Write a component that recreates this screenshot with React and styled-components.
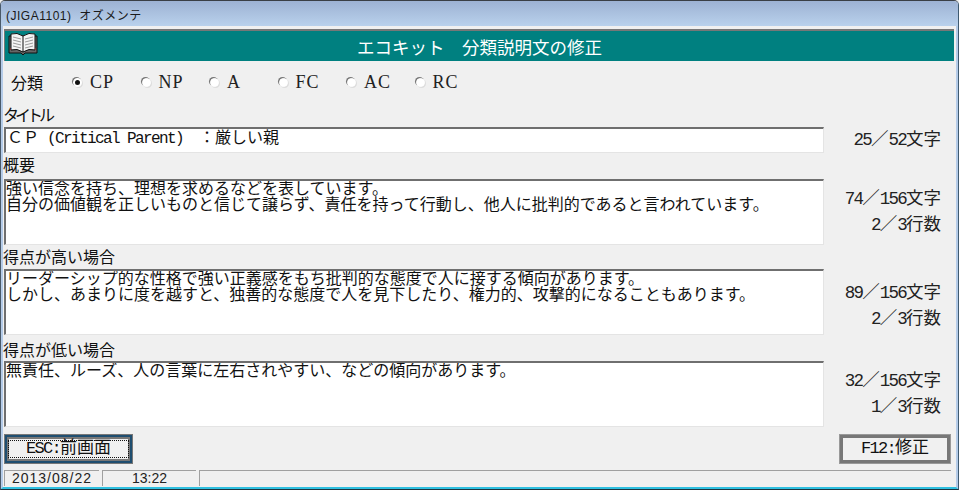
import React from 'react';
import styled, { createGlobalStyle } from 'styled-components';

const Mincho = `"Liberation Mono", "Noto Sans CJK JP", monospace`;

const GlobalStyle = createGlobalStyle`
  html, body {
    margin: 0;
    padding: 0;
    background: #f0f0f0;
  }
`;

const Window = styled.div`
  width: 959px;
  height: 490px;
  box-sizing: border-box;
  display: flex;
  flex-direction: column;
  background: #f0f0f0;
  border-top: 1px solid #3a3f45;
  border-left: 1px solid #4a5a6a;
  border-right: 1px solid #3f5a70;
  border-bottom: 1px solid #20343f;
  border-radius: 5px 5px 0 0;
  overflow: hidden;
  color: #111;
  font-family: ${Mincho};
`;

const TitleBar = styled.div`
  height: 25px;
  flex: none;
  box-sizing: border-box;
  padding: 1px 0 0 5px;
  display: flex;
  align-items: center;
  background: linear-gradient(#9db2d3, #b9d1ec);
  font-family: "Liberation Sans", "Noto Sans CJK JP", sans-serif;
  font-size: 12px;
  letter-spacing: 0.5px;
  color: #1a1a1a;
  white-space: pre;
`;

const Inner = styled.div`
  flex: 1;
  display: flex;
  flex-direction: column;
  min-height: 0;
  border-left: 2px solid #b4cbe8;
  border-right: 2px solid #b4cbe8;
  border-bottom: 2px solid #2fc0e0;
`;

const Banner = styled.div`
  height: 32px;
  flex: none;
  margin: 3px 2px 0 1px;
  box-sizing: border-box;
  border-top: 2px solid #777;
  border-left: 1px solid #777;
  display: flex;
  align-items: center;
  justify-content: center;
  position: relative;
  background: #008080;
  color: #fff;
  font-size: 17.5px;
  white-space: pre;
`;

const BookIcon = styled.svg`
  position: absolute;
  left: 3px;
  top: 1px;
`;

const RadioRow = styled.div`
  height: 42px;
  flex: none;
  display: flex;
  align-items: center;
  padding-left: 8px;
  font-size: 16px;
`;

const GroupLabel = styled.span`
  width: 62px;
`;

const RadioItem = styled.label`
  width: 68.5px;
  display: flex;
  align-items: center;
  gap: 8px;
  font-family: "Liberation Serif", serif;
  font-size: 18px;
  letter-spacing: 1px;
  color: #222;
`;

const RadioDot = styled.span`
  width: 9px;
  height: 9px;
  box-sizing: border-box;
  border-radius: 50%;
  background: ${(p) => (p.$on ? '#111' : '#fff')};
  border: ${(p) => (p.$on ? '2px solid #fff' : '1px solid #fff')};
  box-shadow: -1px -1px 0 #777, 1px 1px 0 #ddd;
`;

const Rows = styled.div`
  flex: none;
  display: flex;
  flex-direction: column;
`;

const Label = styled.div`
  height: ${(p) => p.$h}px;
  box-sizing: border-box;
  display: flex;
  align-items: flex-end;
  padding-bottom: ${(p) => p.$pb}px;
  font-size: 16px;
  line-height: 16px;
  letter-spacing: ${(p) => (p.$tight ? '-4px' : '0')};
  white-space: pre;
`;

const FieldRow = styled.div`
  display: grid;
  grid-template-columns: 820px 117px;
  margin-left: 1px;
`;

const Box = styled.div`
  height: ${(p) => p.$h}px;
  box-sizing: border-box;
  background: #fff;
  border-top: 2px solid #6f6f6f;
  border-left: 2px solid #6f6f6f;
  border-right: 1px solid #e4e4e4;
  border-bottom: 1px solid #e4e4e4;
  padding: ${(p) => p.$pt}px 0 0 ${(p) => p.$pl || 0}px;
  font-size: 16px;
  line-height: 16px;
  white-space: pre;
  overflow: hidden;
`;

const Counts = styled.div`
  display: flex;
  flex-direction: column;
  align-items: flex-end;
  justify-content: center;
  gap: 10px;
  padding-top: ${(p) => p.$pt || 0}px;
  font-size: 17.5px;
  line-height: 16px;
  color: #222;
`;

const HalfWidth = styled.span`
  letter-spacing: -0.1em;
`;

const ButtonRow = styled.div`
  flex: none;
  display: flex;
  justify-content: space-between;
  align-items: flex-start;
  margin-top: 7px;
  padding: 0 5px 0 1px;
`;

const Key = styled.button`
  height: 28px;
  width: ${(p) => p.$w}px;
  margin: 1px;
  box-sizing: border-box;
  padding: 0;
  background: #f0f0f0;
  color: #111;
  font-family: ${Mincho};
  font-size: 17px;
  border: 2px solid ${(p) => (p.$focus ? '#1f4e70' : '#777')};
  outline: 1px solid ${(p) => (p.$focus ? '#777' : '#999')};
  box-shadow: inset 0 0 0 ${(p) => (p.$focus ? '2px #777' : '1px #777')};
`;

const FocusText = styled.span`
  display: block;
  margin: 2px;
  line-height: 16px;
  outline: ${(p) => (p.$focus ? '1px dotted #111' : 'none')};
`;

const StatusBar = styled.div`
  flex: none;
  display: flex;
  gap: 3px;
  margin-top: 6px;
  padding: 0 5px 0 1px;
`;

const StatusCell = styled.div`
  height: 16px;
  box-sizing: border-box;
  ${(p) => (p.$grow ? 'flex: 1;' : `width: ${p.$w}px;`)}
  border-top: 1px solid #a0a0a0;
  border-left: 1px solid #a0a0a0;
  font-family: "Liberation Sans", "Noto Sans CJK JP", sans-serif;
  font-size: 14px;
  line-height: 15px;
  letter-spacing: ${(p) => p.$sp || 0}px;
  text-align: center;
  color: #222;
`;

// half-width latin next to full-width kanji, like a fixed-pitch Japanese font
const Mixed = ({ text }) =>
  text.split(/([\x20-\x7e]+)/).map((part, i) =>
    i % 2 ? <HalfWidth key={i}>{part}</HalfWidth> : part
  );

const book = (
  <BookIcon width="30" height="24" viewBox="0 0 30 24">
    <path d="M1 4 L1 21 L13 21 L15 23 L17 21 L29 21 L29 4 Z" fill="#666" stroke="#111" />
    <path d="M3 2 Q9 0 15 4 Q21 0 27 2 L27 18 Q21 16 15 20 Q9 16 3 18 Z" fill="#f4f4f4" stroke="#111" />
    <path d="M15 4 L15 20" stroke="#111" />
    <path d="M5 5 L13 7 M5 8 L13 10 M5 11 L13 13 M5 14 L13 16 M17 7 L25 5 M17 10 L25 8 M17 13 L25 11 M17 16 L25 14" stroke="#999" />
    <path d="M2 17 L3 17 M27 17 L28 17" stroke="#c33" />
  </BookIcon>
);

const radios = ['CP', 'NP', 'A', 'FC', 'AC', 'RC'];

const fields = [
  {
    label: '概要',
    labelH: 26,
    labelPb: 4,
    lines: '強い信念を持ち、理想を求めるなどを表しています。\n自分の価値観を正しいものと信じて譲らず、責任を持って行動し、他人に批判的であると言われています。',
    counts: ['74／156文字', '2／3行数'],
    countsPt: 0,
  },
  {
    label: '得点が高い場合',
    labelH: 24,
    labelPb: 2,
    lines: 'リーダーシップ的な性格で強い正義感をもち批判的な態度で人に接する傾向があります。\nしかし、あまりに度を越すと、独善的な態度で人を見下したり、権力的、攻撃的になることもあります。',
    counts: ['89／156文字', '2／3行数'],
    countsPt: 8,
  },
  {
    label: '得点が低い場合',
    labelH: 26,
    labelPb: 1,
    lines: '無責任、ルーズ、人の言葉に左右されやすい、などの傾向があります。',
    counts: ['32／156文字', '1／3行数'],
    countsPt: 0,
  },
];

export default function App() {
  return (
    <>
      <GlobalStyle />
      <Window>
        <TitleBar>(JIGA1101)  オズメンテ</TitleBar>
        <Inner>
          <Banner>
            {book}
            <Mixed text="エコキット  分類説明文の修正" />
          </Banner>
          <RadioRow>
            <GroupLabel>分類</GroupLabel>
            {radios.map((r, i) => (
              <RadioItem key={r}>
                <RadioDot $on={i === 0} />
                {r}
              </RadioItem>
            ))}
          </RadioRow>
          <Rows>
            <Label $h={24} $pb={2} $tight>タイトル</Label>
            <FieldRow>
              <Box $h={26} $pt={2} $pl={1}>
                <Mixed text="ＣＰ (Critical Parent)  ：厳しい親" />
              </Box>
              <Counts>
                <span><Mixed text="25／52文字" /></span>
              </Counts>
            </FieldRow>
            {fields.map((f) => (
              <React.Fragment key={f.label}>
                <Label $h={f.labelH} $pb={f.labelPb}>{f.label}</Label>
                <FieldRow>
                  <Box $h={66} $pt={1}>{f.lines}</Box>
                  <Counts $pt={f.countsPt}>
                    {f.counts.map((c) => (
                      <span key={c}><Mixed text={c} /></span>
                    ))}
                  </Counts>
                </FieldRow>
              </React.Fragment>
            ))}
          </Rows>
          <ButtonRow>
            <Key $w={127} $focus>
              <FocusText $focus><Mixed text="ESC:前画面" /></FocusText>
            </Key>
            <Key $w={110}>
              <FocusText><Mixed text="F12:修正" /></FocusText>
            </Key>
          </ButtonRow>
          <StatusBar>
            <StatusCell $w={95} $sp={1}>2013/08/22</StatusCell>
            <StatusCell $w={94}>13:22</StatusCell>
            <StatusCell $grow />
          </StatusBar>
        </Inner>
      </Window>
    </>
  );
}
